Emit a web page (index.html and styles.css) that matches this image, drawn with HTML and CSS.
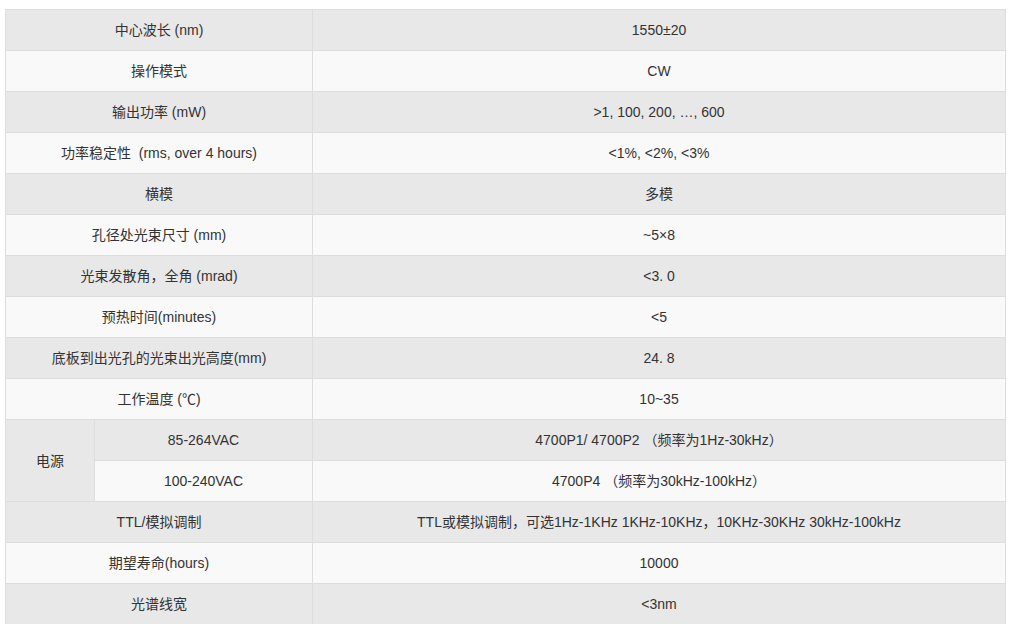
FILE: index.html
```html
<!DOCTYPE html>
<html lang="zh">
<head>
<meta charset="utf-8">
<link rel="stylesheet" href="styles.css">
</head>
<body>
<table class="spec">
  <colgroup>
    <col class="c1"><col class="c2"><col class="c3">
  </colgroup>
  <tbody>
    <tr><td colspan="2">中心波长 (nm)</td><td>1550±20</td></tr>
    <tr><td colspan="2">操作模式</td><td>CW</td></tr>
    <tr><td colspan="2">输出功率 (mW)</td><td>&gt;1, 100, 200, …, 600</td></tr>
    <tr><td colspan="2">功率稳定性&nbsp;&nbsp;(rms, over 4 hours)</td><td>&lt;1%, &lt;2%, &lt;3%</td></tr>
    <tr><td colspan="2">横模</td><td>多模</td></tr>
    <tr><td colspan="2">孔径处光束尺寸 (mm)</td><td>~5×8</td></tr>
    <tr><td colspan="2">光束发散角，全角 (mrad)</td><td>&lt;3. 0</td></tr>
    <tr><td colspan="2">预热时间(minutes)</td><td>&lt;5</td></tr>
    <tr><td colspan="2">底板到出光孔的光束出光高度(mm)</td><td>24. 8</td></tr>
    <tr><td colspan="2">工作温度 (℃)</td><td>10~35</td></tr>
    <tr><td rowspan="2">电源</td><td>85-264VAC</td><td>4700P1/ 4700P2 （频率为1Hz-30kHz）</td></tr>
    <tr><td>100-240VAC</td><td>4700P4 （频率为30kHz-100kHz）</td></tr>
    <tr><td colspan="2">TTL/模拟调制</td><td>TTL或模拟调制，可选1Hz-1KHz 1KHz-10KHz，10KHz-30KHz 30kHz-100kHz</td></tr>
    <tr><td colspan="2">期望寿命(hours)</td><td>10000</td></tr>
    <tr><td colspan="2">光谱线宽</td><td>&lt;3nm</td></tr>
  </tbody>
</table>
</body>
</html>
```
FILE: styles.css
```css
html, body {
  margin: 0;
  padding: 0;
  background: #ffffff;
}
body {
  padding: 9px 0 0 5px;
  font-family: "Liberation Sans", "Noto Sans CJK SC", sans-serif;
  font-size: 14px;
  color: #333333;
}
.spec {
  border-collapse: collapse;
  width: 1000px;
  table-layout: fixed;
}
.c1 { width: 89px; }
.c2 { width: 218px; }
.c3 { width: 693px; }
.spec td {
  border: 1px solid #dddddd;
  height: 41px;
  padding: 0 8px;
  text-align: center;
  vertical-align: middle;
  box-sizing: border-box;
  line-height: 20px;
}
.spec tr:nth-child(odd) td { background: #e8e8e8; }
.spec tr:nth-child(even) td { background: #f9f9f9; }
```
